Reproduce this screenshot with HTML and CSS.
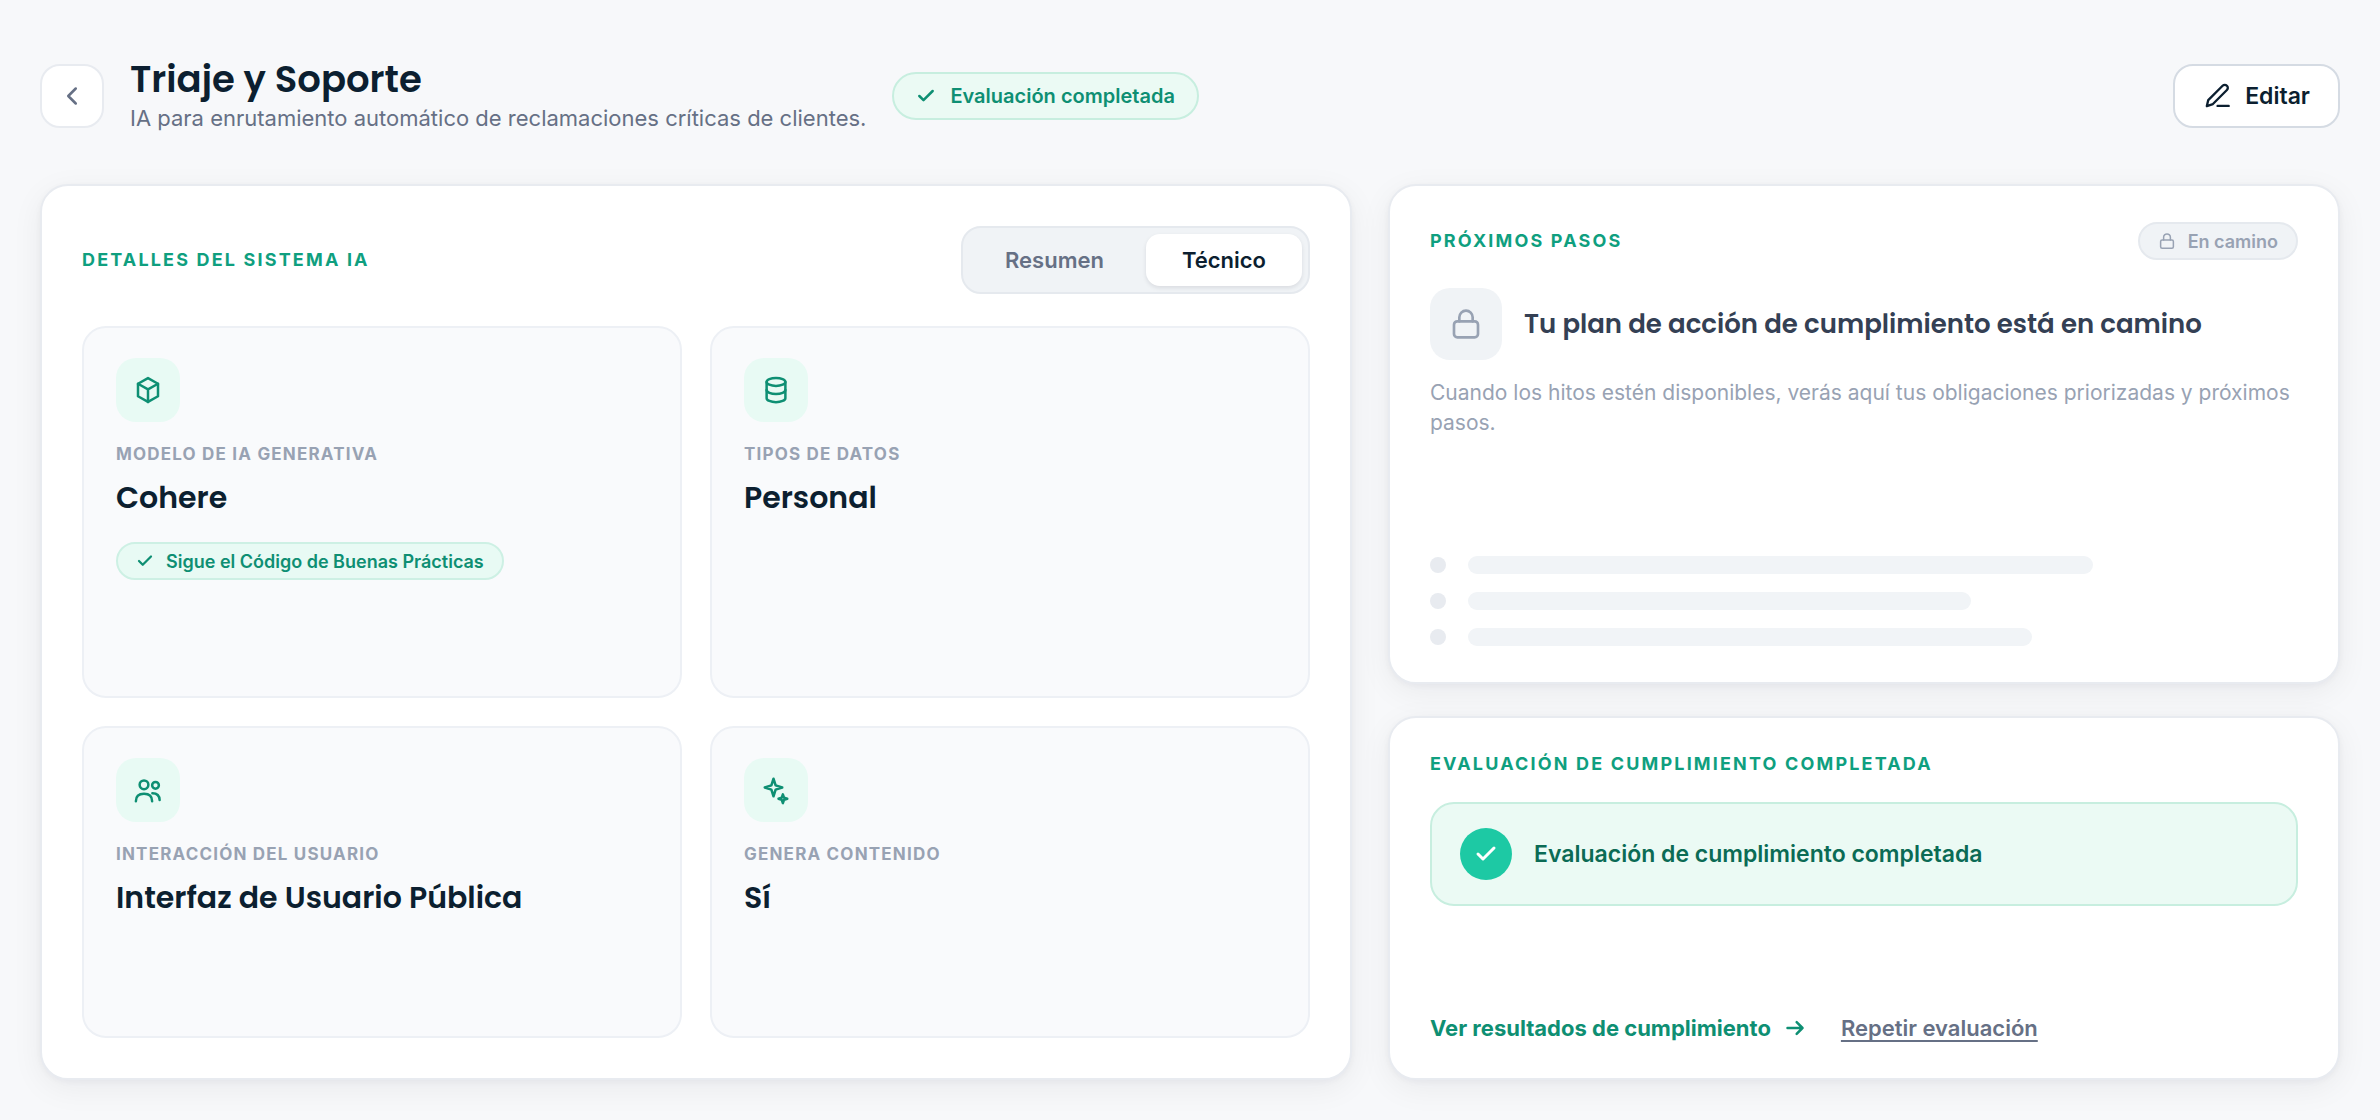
FILE: index.html
```
<!DOCTYPE html>
<html lang="es">
<head>
    <meta charset="UTF-8">
    <meta name="viewport" content="width=device-width, initial-scale=1.0">
    <title>Triaje y Soporte</title>
    <link rel="stylesheet" href="styles.css">
</head>
<body>

    <!-- Header -->
    <header class="page-header">
        <button class="back-btn" type="button" aria-label="Volver">
            <svg class="icon-lg" viewBox="0 0 24 24"><path d="M15 18l-6-6 6-6"/></svg>
        </button>
        <div class="heading">
            <h1>Triaje y Soporte</h1>
            <p>IA para enrutamiento automático de reclamaciones críticas de clientes.</p>
        </div>
        <span class="status">
            <svg class="icon-sm" viewBox="0 0 24 24"><path d="M20 6L9 17l-5-5"/></svg>
            Evaluación completada
        </span>
        <button class="edit-btn" type="button">
            <svg class="icon-md" viewBox="0 0 24 24"><path d="M12.500 20.500H22"/><path d="M16.800 3.200a2.500 2.500 0 0 1 3.700 3.700L8.500 18.900l-5.200 1.700 1.200-5.100z"/></svg>
            Editar
        </button>
    </header>

    <main class="layout">

        <!-- System details -->
        <section class="card details">
            <div class="details-head">
                <h2>Detalles del sistema IA</h2>
                <div class="tabs">
                    <button type="button">Resumen</button>
                    <button type="button" class="active">Técnico</button>
                </div>
            </div>
            <div class="tiles">
                <article class="tile">
                    <div class="tile-icon">
                        <svg class="icon-lg" viewBox="0 0 24 24"><path d="M12 2.500l8 4.500v10l-8 4.500-8-4.500V7z"/><path d="M4 7l8 4.500L20 7M12 11.500v10"/></svg>
                    </div>
                    <h3>Modelo de IA generativa</h3>
                    <p class="value">Cohere</p>
                    <span class="tag tag-green">
                        <svg viewBox="0 0 24 24"><path d="M20 6L9 17l-5-5"/></svg>
                        Sigue el Código de Buenas Prácticas
                    </span>
                </article>
                <article class="tile">
                    <div class="tile-icon">
                        <svg class="icon-lg" viewBox="0 0 24 24"><ellipse cx="12" cy="5.500" rx="7.500" ry="3.200"/><path d="M4.500 5.500v13c0 1.800 3.400 3.200 7.500 3.200s7.500-1.400 7.500-3.200v-13"/><path d="M4.500 12c0 1.800 3.400 3.200 7.500 3.200s7.500-1.400 7.500-3.200"/></svg>
                    </div>
                    <h3>Tipos de datos</h3>
                    <p class="value">Personal</p>
                </article>
                <article class="tile">
                    <div class="tile-icon">
                        <svg class="icon-lg" viewBox="0 0 24 24"><circle cx="8.800" cy="7.800" r="3.500"/><path d="M2.300 21c0-4 2.600-6 6.500-6s6.500 2 6.500 6"/><circle cx="18" cy="8.200" r="2.700"/><path d="M15.500 14.500c3.500 0 5.700 2 5.800 5.500"/></svg>
                    </div>
                    <h3>Interacción del usuario</h3>
                    <p class="value">Interfaz de Usuario Pública</p>
                </article>
                <article class="tile">
                    <div class="tile-icon">
                        <svg class="icon-lg" viewBox="0 0 24 24"><path d="M10 3l1.700 5.300L17 10l-5.300 1.700L10 17l-1.700-5.300L3 10l5.300-1.700z"/><path d="M17.500 15.500l.9 2.600 2.600.9-2.600.9-.9 2.600-.9-2.600-2.600-.9 2.600-.9z"/></svg>
                    </div>
                    <h3>Genera contenido</h3>
                    <p class="value">Sí</p>
                </article>
            </div>
        </section>

        <div class="side">

            <!-- Next steps -->
            <section class="card side-card">
                <div>
                    <div class="side-head">
                        <h2>Próximos pasos</h2>
                        <span class="tag tag-gray">
                            <svg viewBox="0 0 24 24"><rect x="3.500" y="10.500" width="17" height="11" rx="2"/><path d="M7.500 10.500V7a4.500 4.500 0 0 1 9 0v3.500"/></svg>
                            En camino
                        </span>
                    </div>
                    <div class="plan">
                        <div class="plan-icon">
                            <svg viewBox="0 0 24 24"><rect x="3" y="10" width="18" height="12" rx="2.500"/><path d="M7 10V7a5 5 0 0 1 10 0v3"/></svg>
                        </div>
                        <p>Tu plan de acción de cumplimiento está en camino</p>
                    </div>
                    <p class="note">Cuando los hitos estén disponibles, verás aquí tus obligaciones priorizadas y próximos pasos.</p>
                </div>
                <div class="skeleton">
                    <div class="skeleton-row"><i></i><b style="width: 72%;"></b></div>
                    <div class="skeleton-row"><i></i><b style="width: 58%;"></b></div>
                    <div class="skeleton-row"><i></i><b style="width: 65%;"></b></div>
                </div>
            </section>

            <!-- Compliance evaluation -->
            <section class="card side-card">
                <div>
                    <h2>Evaluación de cumplimiento completada</h2>
                    <div class="done">
                        <span class="done-icon">
                            <svg viewBox="0 0 24 24"><path d="M20 6L9 17l-5-5"/></svg>
                        </span>
                        Evaluación de cumplimiento completada
                    </div>
                </div>
                <div class="links">
                    <a class="results" href="#">
                        Ver resultados de cumplimiento
                        <svg class="icon-sm" viewBox="0 0 24 24"><path d="M3 12h18M14 5l7 7-7 7"/></svg>
                    </a>
                    <a class="repeat" href="#">Repetir evaluación</a>
                </div>
            </section>

        </div>
    </main>

</body>
</html>
```

FILE: styles.css
```
* { box-sizing: border-box; margin: 0; padding: 0; }
body { min-height: 100vh; display: flex; flex-direction: column; gap: 48px; padding: 56px 40px 40px; background: #f7f8fa; color: #0c1f30; font-family: "Inter", "Liberation Sans", sans-serif; font-size: 22px; }
button { font: inherit; cursor: pointer; }
svg { flex-shrink: 0; fill: none; stroke: currentColor; stroke-width: 2; stroke-linecap: round; stroke-linejoin: round; }
.icon-sm { width: 20px; height: 20px; stroke-width: 3; }
.icon-md { width: 28px; height: 28px; }
.icon-lg { width: 30px; height: 30px; }

/* Header */
.page-header { display: flex; align-items: center; gap: 26px; }
.back-btn { width: 64px; height: 64px; display: flex; align-items: center; justify-content: center; background: #fff; border: 2px solid #e8ebf0; border-radius: 20px; color: #667085; }
.heading h1 { font-family: "Poppins", "Inter", sans-serif; font-size: 37px; font-weight: 600; line-height: 46px; }
.heading p { padding-bottom: 2px; color: #667085; line-height: 32px; }
.status { display: flex; align-items: center; gap: 14px; height: 48px; padding: 0 22px; background: #ebfaf4; border: 2px solid #c7eedf; border-radius: 24px; color: #0e8f73; font-size: 20px; font-weight: 600; }
.edit-btn { display: flex; align-items: center; gap: 14px; height: 64px; margin-left: auto; padding: 0 28px; background: #fff; border: 2px solid #d5dbe3; border-radius: 20px; color: #0c1f30; font-size: 23px; font-weight: 600; }

/* Cards */
.layout { flex: 1; display: grid; grid-template-columns: 1312fr 952fr; gap: 36px; }
.card { background: #fff; border: 2px solid #e8ebf0; border-radius: 28px; box-shadow: 0 2px 6px rgba(16, 24, 40, 0.04), 0 8px 32px rgba(16, 24, 40, 0.06); }
.card h2 { color: #0f9f7f; font-size: 18px; font-weight: 700; line-height: 20px; letter-spacing: 0.12em; text-transform: uppercase; }

/* System details */
.details { display: flex; flex-direction: column; gap: 32px; padding: 40px; }
.details-head { display: flex; align-items: center; justify-content: space-between; }
.tabs { display: flex; gap: 6px; padding: 6px; background: #f0f3f6; border: 2px solid #e5e9ee; border-radius: 20px; }
.tabs button { height: 52px; padding: 0 36px; background: none; border: none; border-radius: 14px; color: #667085; font-weight: 600; }
.tabs .active { background: #fff; color: #0c1f30; box-shadow: 0 2px 4px rgba(16, 24, 40, 0.1); }
.tiles { flex: 1; display: grid; grid-template-columns: 1fr 1fr; gap: 28px; }
.tile { display: flex; flex-direction: column; align-items: flex-start; padding: 30px 32px; background: #f9fafc; border: 2px solid #edf0f5; border-radius: 24px; }
.tile-icon { width: 64px; height: 64px; display: flex; align-items: center; justify-content: center; margin-bottom: 22px; background: #e8faf4; border-radius: 20px; color: #0e8f73; }
.tile h3 { color: #98a2b3; font-size: 17px; font-weight: 700; line-height: 20px; letter-spacing: 0.07em; text-transform: uppercase; }
.value { margin-top: 12px; font-family: "Poppins", "Inter", sans-serif; font-size: 30px; font-weight: 600; line-height: 44px; }
.tag { display: flex; align-items: center; gap: 12px; height: 38px; padding: 0 18px; border: 2px solid; border-radius: 19px; font-size: 18px; font-weight: 600; }
.tag svg { width: 18px; height: 18px; }
.tag-green { margin-top: 22px; background: #e8faf4; border-color: #cdf0e4; color: #0e8f73; }
.tag-green svg { stroke-width: 3; }
.tag-gray { background: #f0f3f6; border-color: #e5e9ee; color: #98a2b3; }

/* Side column */
.side { display: flex; flex-direction: column; gap: 32px; }
.side-card { flex: 1 1 auto; display: flex; flex-direction: column; justify-content: space-between; gap: 28px; padding: 36px 40px; }
.side-head { display: flex; align-items: center; justify-content: space-between; }
.plan { display: flex; align-items: center; gap: 22px; margin-top: 28px; font-family: "Poppins", "Inter", sans-serif; font-size: 26px; font-weight: 600; color: #344054; }
.plan-icon { width: 72px; height: 72px; display: flex; align-items: center; justify-content: center; background: #f0f3f6; border-radius: 20px; color: #98a2b3; }
.plan-icon svg { width: 32px; height: 32px; }
.note { margin-top: 18px; color: #98a2b3; font-size: 21px; line-height: 30px; }
.skeleton { display: flex; flex-direction: column; gap: 18px; margin-top: 10px; }
.skeleton-row { display: flex; align-items: center; gap: 22px; }
.skeleton-row i { width: 16px; height: 16px; background: #e8ebf0; border-radius: 50%; }
.skeleton-row b { height: 18px; background: #f1f4f7; border-radius: 9px; }
.done { display: flex; align-items: center; gap: 22px; margin-top: 28px; padding: 24px 28px; background: #ebfaf4; border: 2px solid #c7eedf; border-radius: 24px; color: #0b6b55; font-size: 23px; font-weight: 600; }
.done-icon { width: 52px; height: 52px; display: flex; align-items: center; justify-content: center; background: #1dc9a4; border-radius: 50%; color: #fff; }
.done-icon svg { width: 24px; height: 24px; stroke-width: 3; }
.links { display: flex; align-items: center; gap: 36px; line-height: 28px; }
.links a { display: flex; align-items: center; gap: 14px; }
.results { color: #0e8f73; font-weight: 700; text-decoration: none; }
.repeat { color: #667085; font-weight: 600; text-underline-offset: 4px; text-decoration-thickness: 2px; }
```
